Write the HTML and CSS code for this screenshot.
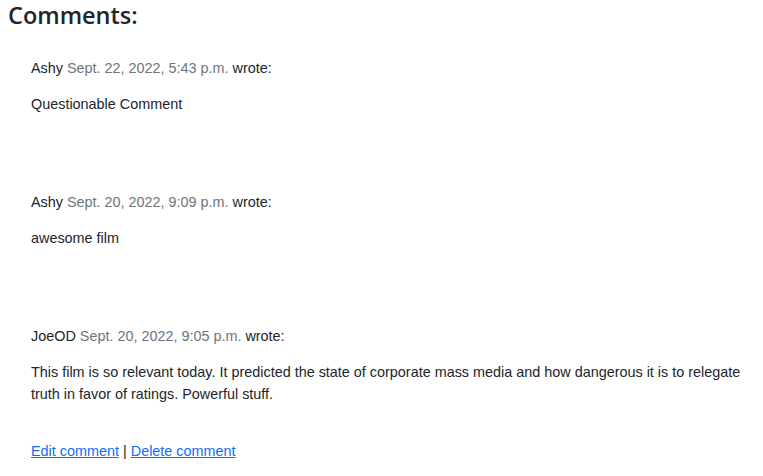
FILE: index.html
```html
<!DOCTYPE html>
<html lang="en">
<head>
<meta charset="utf-8">
<title>Comments</title>
<link rel="stylesheet" href="styles.css">
</head>
<body>
<div class="page">
  <h2 class="title">Comments:</h2>
  <div class="comments">
    <div class="comment">
      <p class="meta"><span class="author">Ashy</span> <span class="date">Sept. 22, 2022, 5:43 p.m.</span> wrote:</p>
      <p class="body">Questionable Comment</p>
    </div>
    <div class="comment">
      <p class="meta"><span class="author">Ashy</span> <span class="date">Sept. 20, 2022, 9:09 p.m.</span> wrote:</p>
      <p class="body">awesome film</p>
    </div>
    <div class="comment last">
      <p class="meta"><span class="author">JoeOD</span> <span class="date">Sept. 20, 2022, 9:05 p.m.</span> wrote:</p>
      <p class="body">This film is so relevant today. It predicted the state of corporate mass media and how dangerous it is to relegate truth in favor of ratings. Powerful stuff.</p>
    </div>
    <p class="actions"><a href="#">Edit comment</a> | <a href="#">Delete comment</a></p>
  </div>
</div>
</body>
</html>
```
FILE: styles.css
```css
html, body {
  margin: 0;
  padding: 0;
  background: #ffffff;
}
body {
  font-family: "Liberation Sans", Arial, sans-serif;
  font-size: 14.4px;
  line-height: 22px;
  color: #212529;
}
.page {
  padding: 0 8px;
}
.title {
  margin: 0;
  padding-top: 1px;
  font-family: "Open Sans", "Noto Sans", sans-serif;
  font-size: 23.5px;
  font-weight: 600;
  line-height: 28px;
  color: #212529;
}
.comments {
  padding: 28px 12px 0 23px;
}
.comment {
  margin-bottom: 76px;
}
.comment.last {
  margin-bottom: 35px;
}
.meta {
  margin: 0 0 14px;
}
.date {
  color: #6c757d;
}
.body {
  margin: 0;
}
.actions {
  margin: 0;
}
.actions a {
  color: #0d6efd;
  text-decoration: underline;
}
```
